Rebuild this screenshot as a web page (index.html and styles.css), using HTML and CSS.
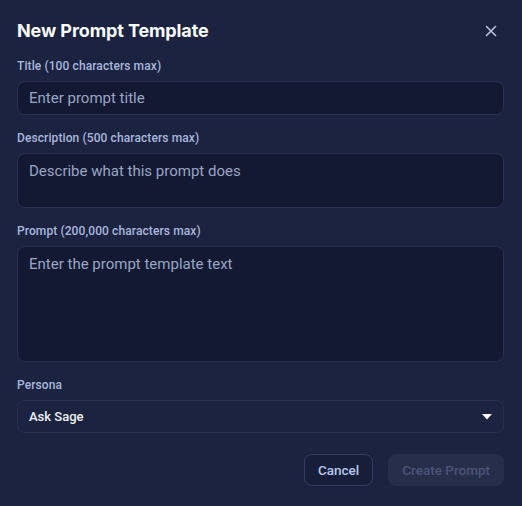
FILE: index.html
```html
<!DOCTYPE html>
<html>
<head>
<meta charset="utf-8">
<link rel="stylesheet" href="styles.css">
</head>
<body>
<div class="modal">
  <div class="header">
    <h1 class="title">New Prompt Template</h1>
    <button class="close" aria-label="Close">
      <svg width="12" height="12" viewBox="0 0 12 12"><path d="M1.5 1.5 L10.5 10.5 M10.5 1.5 L1.5 10.5" stroke="currentColor" stroke-width="1.6" stroke-linecap="round"/></svg>
    </button>
  </div>
  <div class="field">
    <label class="label">Title (100 characters max)</label>
    <input class="input" type="text" placeholder="Enter prompt title">
  </div>
  <div class="field">
    <label class="label">Description (500 characters max)</label>
    <textarea class="input area-desc" placeholder="Describe what this prompt does"></textarea>
  </div>
  <div class="field">
    <label class="label">Prompt (200,000 characters max)</label>
    <textarea class="input area-prompt" placeholder="Enter the prompt template text"></textarea>
  </div>
  <div class="field">
    <label class="label">Persona</label>
    <div class="select">
      <span class="select-value">Ask Sage</span>
      <svg class="caret" width="10" height="6" viewBox="0 0 10 6"><path d="M0 0 H10 L5 5.5 Z" fill="#ffffff"/></svg>
    </div>
  </div>
  <div class="actions">
    <button class="btn btn-cancel">Cancel</button>
    <button class="btn btn-create" disabled>Create Prompt</button>
  </div>
</div>
</body>
</html>
```
FILE: styles.css
```css
* { box-sizing: border-box; }
html, body {
  margin: 0;
  padding: 0;
  background: #1c2340;
  font-family: Roboto, "Noto Sans", sans-serif;
}
.modal {
  width: 522px;
  height: 506px;
  padding: 17px 18px 0 17px;
  background: #1c2340;
}
.header {
  display: flex;
  align-items: center;
  justify-content: space-between;
  height: 28px;
  margin-bottom: 13px;
}
.title {
  margin: 0;
  font-family: Inter, "Noto Sans", sans-serif;
  font-size: 18px;
  line-height: 28px;
  font-weight: 700;
  color: #ffffff;
  letter-spacing: -0.1px;
}
.close {
  background: none;
  border: none;
  padding: 0;
  margin-right: 7px;
  color: #b9c1de;
  display: flex;
  cursor: pointer;
}
.field {
  display: flex;
  flex-direction: column;
  margin-bottom: 15px;
}
.label {
  font-size: 12px;
  line-height: 16px;
  font-weight: 500;
  color: #a9b7de;
  margin-bottom: 7px;
  letter-spacing: 0.1px;
}
.input {
  width: 100%;
  height: 34px;
  background: #131932;
  border: 1px solid #28304f;
  border-radius: 8px;
  padding: 0 11px;
  font-family: Roboto, "Noto Sans", sans-serif;
  font-size: 15px;
  color: #e6eaf6;
  outline: none;
  resize: none;
  display: block;
}
.input::placeholder { color: #9aa5c4; opacity: 1; }
textarea.input {
  padding: 7px 11px;
  line-height: 20px;
}
.area-desc { height: 55px; }
.area-prompt { height: 116px; }
.select {
  height: 33px;
  border: 1px solid #28304f;
  border-radius: 8px;
  display: flex;
  align-items: center;
  justify-content: space-between;
  padding: 0 11px;
}
.select-value {
  font-size: 13px;
  font-weight: 500;
  color: #eef1fa;
}
.caret { margin-top: 1px; }
.actions {
  display: flex;
  justify-content: flex-end;
  gap: 15px;
  margin-top: 21px;
}
.btn {
  height: 32px;
  border-radius: 8px;
  font-family: Roboto, "Noto Sans", sans-serif;
  font-size: 13.5px;
  font-weight: 500;
  padding: 0 13px;
}
.btn-cancel {
  background: #171e39;
  border: 1px solid #343d62;
  color: #b7c7f0;
}
.btn-create {
  background: #272e4b;
  border: 1px solid #272e4b;
  color: #4c5479;
}
```
